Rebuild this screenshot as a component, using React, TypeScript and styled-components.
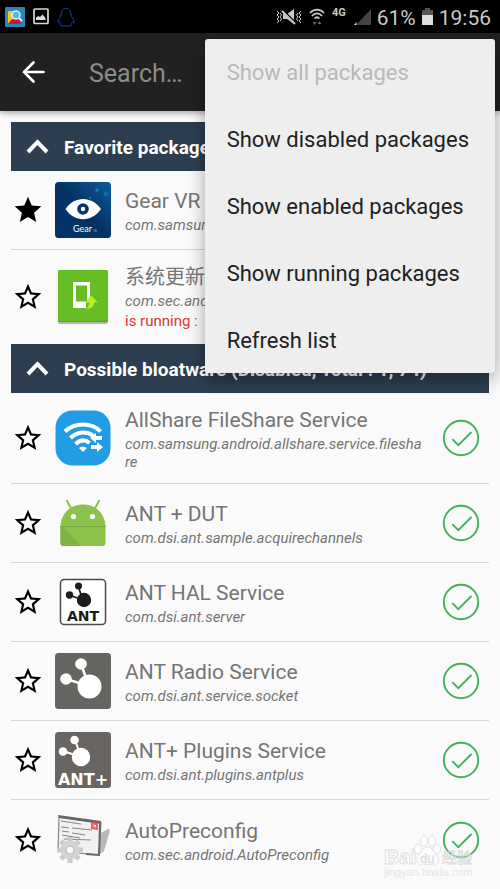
import React from 'react';
import styled, { createGlobalStyle, css } from 'styled-components';

const Global = createGlobalStyle`
  * { box-sizing: border-box; }
  body {
    margin: 0;
    background: #fafafa;
    font-family: Roboto, "Noto Sans CJK SC", sans-serif;
  }
  button { font: inherit; border: 0; padding: 0; background: none; color: inherit; text-align: left; }
`;

const Page = styled.div`
  position: relative;
  min-height: 100vh;
  overflow: hidden;
`;

const StatusBar = styled.header`
  display: flex;
  align-items: center;
  justify-content: space-between;
  height: 33px;
  padding: 0 9px 0 5px;
  background: #000;
  color: #c9c9c9;
`;

const StatusGroup = styled.div<{ $gap: number }>`
  display: flex;
  align-items: center;
  gap: ${(p) => p.$gap}px;
`;

const StatusText = styled.span`
  font-size: 21px;
  line-height: 33px;
  padding-top: 3px;
`;

const NetworkLabel = styled.span`
  align-self: flex-start;
  padding: 7px 2px 0 0;
  font-size: 11px;
  line-height: 14px;
  font-weight: 700;
`;

const Toolbar = styled.div`
  position: relative;
  display: flex;
  align-items: center;
  gap: 40px;
  height: 78px;
  padding: 0 20px;
  background: #212121;
  box-shadow: 0 2px 6px rgba(0, 0, 0, 0.35);
`;

const IconButton = styled.button`
  display: flex;
  flex: none;
  align-items: center;
  justify-content: center;
`;

const SearchInput = styled.input`
  flex: 1;
  min-width: 0;
  padding: 4px 0 0;
  border: 0;
  outline: 0;
  background: transparent;
  color: #fff;
  font: 400 25px/32px Roboto, sans-serif;
  &::placeholder { color: #8c8c8c; opacity: 1; }
`;

const Menu = styled.div`
  position: absolute;
  top: 39px;
  right: 5px;
  z-index: 2;
  display: grid;
  gap: 1px;
  border-radius: 3px;
  background: #eee;
  box-shadow: 0 6px 18px rgba(0, 0, 0, 0.35);
`;

const MenuItem = styled.button`
  height: 66px;
  padding: 2px 26px 0 22px;
  color: #212121;
  font-size: 22px;
  line-height: 30px;
  white-space: nowrap;
  &:disabled { color: #b9b9b9; }
`;

const List = styled.main`
  padding: 11px 11px 9px;
`;

const GroupHeader = styled.button`
  display: flex;
  align-items: center;
  gap: 15px;
  width: 100%;
  height: 49px;
  padding: 2px 15px 0;
  background: #2c3e50;
  color: #fff;
  font-size: 19px;
  line-height: 26px;
  font-weight: 700;
  white-space: nowrap;
`;

const Rows = styled.ul`
  margin: 0;
  padding: 0;
  list-style: none;
`;

const Row = styled.li<{ $divided: boolean }>`
  display: flex;
  align-items: center;
  min-height: 79px;
  padding: 12px 9px 12px 1px;
  ${(p) => p.$divided && css`border-bottom: 1px solid #d4d4d4;`}
`;

const AppIcon = styled.svg`
  flex: none;
  width: 56px;
  height: 56px;
  margin: -4px 14px -4px 11px;
`;

const RowText = styled.div`
  flex: 1;
  min-width: 0;
  padding-right: 18px;
  color: #757575;
`;

const Title = styled.div`
  font-size: 21px;
  line-height: 30px;
  &:lang(zh) { font-size: 20px; }
`;

const PackageName = styled.div`
  font-size: 15px;
  line-height: 18px;
  font-style: italic;
  word-break: break-all;
`;

const Running = styled.div`
  color: #d9382c;
  font-size: 15px;
  line-height: 22px;
`;

const Watermark = styled.div`
  position: absolute;
  right: 26px;
  bottom: 6px;
  z-index: 3;
  pointer-events: none;
  opacity: 0.8;
`;

const Star = ({ filled }: { filled?: boolean }) => (
  <svg width="32" height="32" viewBox="0 0 24 24" aria-hidden="true">
    <path
      d={filled
        ? 'M12 17.27L18.18 21l-1.64-7.03L22 9.24l-7.19-.61L12 2 9.19 8.63 2 9.24l5.46 4.73L5.82 21z'
        : 'M22 9.24l-7.19-.62L12 2 9.19 8.63 2 9.24l5.46 4.73L5.82 21 12 17.27 18.18 21l-1.63-7.03L22 9.24zM12 15.4l-3.76 2.27 1-4.28-3.32-2.88 4.38-.38L12 6.1l1.71 4.04 4.38.38-3.32 2.88 1 4.28L12 15.4z'}
      fill="#000"
    />
  </svg>
);

const Check = () => (
  <svg width="38" height="38" viewBox="0 0 38 38" fill="none" stroke="#43b05c" aria-hidden="true">
    <circle cx="19" cy="19" r="17.2" strokeWidth="1.9" />
    <path d="M10.3 20.2l6 6L29.5 13" strokeWidth="1.9" />
  </svg>
);

const Chevron = () => (
  <svg width="23" height="18" viewBox="0 0 23 18" fill="none" stroke="#fff" strokeWidth="4" aria-hidden="true">
    <path d="M2 13l9.5-9.8L21 13" />
  </svg>
);

type IconName = 'gear' | 'update' | 'share' | 'android' | 'antHal' | 'antRadio' | 'antPlus' | 'config';

const art: Record<IconName, React.ReactNode> = {
  gear: (
    <>
      <defs>
        <linearGradient id="gearBg" x1="0" y1="1" x2="1" y2="0">
          <stop offset="0" stopColor="#04336c" />
          <stop offset=".5" stopColor="#053263" />
          <stop offset="1" stopColor="#0b5a9d" />
        </linearGradient>
      </defs>
      <rect width="56" height="56" rx="3.5" fill="url(#gearBg)" />
      <circle cx="42" cy="8" r="1.8" fill="#2b8fd0" opacity=".7" />
      <circle cx="51" cy="12" r="2.6" fill="#2b8fd0" opacity=".4" />
      <circle cx="35" cy="16" r="1" fill="#4ba5dc" opacity=".6" />
      <path d="M10.5 27C19 13.5 37 13.5 46 27 37 40.5 19 40.5 10.5 27z" fill="#fff" />
      <circle cx="28" cy="27" r="5.8" fill="#063566" />
      <circle cx="28" cy="27" r="2.2" fill="#fff" />
      <text x="18" y="50" fill="#fff" fontSize="9" fontFamily="Lato, sans-serif">Gear</text>
      <text x="38" y="50" fill="#8fb3d4" fontSize="3" fontFamily="Lato, sans-serif">VR</text>
    </>
  ),
  update: (
    <>
      <rect x="3" y="4" width="50" height="51" rx="2" fill="#b5b5b5" />
      <rect x="3" y="1" width="50" height="52" rx="2" fill="#5c9d28" />
      <rect x="3" y="1" width="50" height="51" rx="2" fill="#68bd27" />
      <path fillRule="evenodd" d="M18 13h17v15l-4 5v6H18zM21 16.5v16h11v-16z" fill="#fff" />
      <path d="M29 39.5c4 0 5-2 5-6h-4l6.5-7 6 7H39c0 5-4 7-10 6z" fill="#b9f021" />
    </>
  ),
  share: (
    <>
      <rect x=".5" y=".5" width="55" height="55" rx="17" fill="#229ce4" />
      <g fill="none" stroke="#fff" strokeWidth="4">
        <path d="M10 21.5C19 12 37 12 45.5 21.5" />
        <path d="M15.5 28c7-7 17-7 23-2" />
        <path d="M20.5 34c5-4.5 10-4.5 14-1" />
      </g>
      <path d="M24 38c2.5-2 5.5-2 8 0l-4 4zM35 28l6-5v3h6v4h-6v3zM48 37l-6-5v3h-6v4h6v3z" fill="#fff" />
    </>
  ),
  android: (
    <>
      <path d="M11.5 5l5.5 10M44.5 5L39 15" stroke="#8bc34a" strokeWidth="2" />
      <path d="M5.5 32C6 2 50 2 50.5 32z" fill="#8bc34a" />
      <path d="M5.5 31h45v17a3 3 0 0 1-3 3h-39a3 3 0 0 1-3-3z" fill="#8bc34a" />
      <path d="M7 31l19 20H8.5a3 3 0 0 1-3-3V31z" fill="#7fb243" />
      <path d="M5.5 31.5h45" stroke="#76a83d" />
      <circle cx="18.5" cy="21.5" r="2.6" fill="#fff" />
      <circle cx="37.5" cy="21.5" r="2.6" fill="#fff" />
    </>
  ),
  antHal: (
    <>
      <rect x="5.5" y="5.5" width="45" height="45" rx="3.5" fill="#fff" stroke="#4a4a4a" strokeWidth="1.5" />
      <path d="M23 12l5 14M14 21l14 5" stroke="#1c1c1c" strokeWidth="1.8" />
      <g fill="#1c1c1c">
        <circle cx="23.5" cy="12" r="3.5" />
        <circle cx="14.5" cy="21" r="3.7" />
        <circle cx="29" cy="26" r="7.2" />
        <text x="28" y="47" textAnchor="middle" fontSize="14" fontWeight="700" fontFamily="DejaVu Sans, sans-serif">ANT</text>
      </g>
    </>
  ),
  antRadio: (
    <>
      <rect width="56" height="56" rx="3.5" fill="#666562" />
      <path d="M26 11l8 22M11 26l23 7" stroke="#fff" strokeWidth="2.5" />
      <g fill="#fff">
        <circle cx="26" cy="11" r="5.8" />
        <circle cx="11" cy="26" r="5.8" />
        <circle cx="34.5" cy="33.5" r="12" />
      </g>
    </>
  ),
  antPlus: (
    <>
      <rect width="56" height="56" rx="3.5" fill="#696562" />
      <path d="M20 8l6 17M8 19l18 6" stroke="#fff" strokeWidth="2" />
      <g fill="#fff">
        <circle cx="19.5" cy="8" r="4.3" />
        <circle cx="8" cy="19.5" r="4.3" />
        <circle cx="26" cy="25" r="9.2" />
        <text x="28" y="53" textAnchor="middle" fontSize="16" fontWeight="700" fontFamily="DejaVu Sans, sans-serif">ANT+</text>
      </g>
    </>
  ),
  config: (
    <>
      <path d="M44 22l9-5c2 0 2 2 1 5l-5 17-5 4H32z" fill="#8c8c8c" opacity=".6" />
      <path d="M4 5l42 6-2 32-41-4z" fill="#f1f1f1" stroke="#888" strokeWidth="1.2" />
      <path d="M3 3l43 6v3L4 6z" fill="#666" />
      <path d="M45 12l-1 31-13-1" stroke="#666" strokeWidth="2" fill="none" />
      <path d="M6 9l20 3M6 15l8 1M17 16l20 2M7 19l7 1M17 21l13 2M7 23l18 3M9 27l27 1" stroke="#888" strokeWidth="1.2" />
      <path d="M36 10l7 1v7l-7-1z" fill="#ef5b60" />
      <path d="M38.5 12.5l2.5 3m0-2.5l-2.5 2" stroke="#fff" />
      <g transform="translate(15 38)">
        <g stroke="#cbcbcb" strokeWidth="5">
          <path d="M0-13V13M-13 0H13M-9-9L9 9M-9 9L9-9" />
        </g>
        <circle r="9.5" fill="#d3d3d3" />
        <circle r="4" fill="#fafafa" stroke="#bababa" />
      </g>
    </>
  ),
};

interface AppEntry {
  icon: IconName;
  title: string;
  pkg: string;
  lang?: string;
  favorite?: boolean;
  running?: string;
}

const favorites: AppEntry[] = [
  { icon: 'gear', title: 'Gear VR', pkg: 'com.samsung.android.hmt', favorite: true },
  { icon: 'update', title: '系统更新', lang: 'zh', pkg: 'com.sec.android.fota', running: 'is running : ' },
];

const bloatware: AppEntry[] = [
  { icon: 'share', title: 'AllShare FileShare Service', pkg: 'com.samsung.android.allshare.service.fileshare' },
  { icon: 'android', title: 'ANT + DUT', pkg: 'com.dsi.ant.sample.acquirechannels' },
  { icon: 'antHal', title: 'ANT HAL Service', pkg: 'com.dsi.ant.server' },
  { icon: 'antRadio', title: 'ANT Radio Service', pkg: 'com.dsi.ant.service.socket' },
  { icon: 'antPlus', title: 'ANT+ Plugins Service', pkg: 'com.dsi.ant.plugins.antplus' },
  { icon: 'config', title: 'AutoPreconfig', pkg: 'com.sec.android.AutoPreconfig' },
];

const menuItems = [
  'Show all packages',
  'Show disabled packages',
  'Show enabled packages',
  'Show running packages',
  'Refresh list',
];

const Group = ({ title, apps }: { title: string; apps: AppEntry[] }) => (
  <section>
    <GroupHeader type="button" aria-expanded="true"><Chevron />{title}</GroupHeader>
    <Rows>
      {apps.map((app, i) => (
        <Row key={app.pkg} $divided={i < apps.length - 1}>
          <IconButton type="button" aria-label="Favorite"><Star filled={app.favorite} /></IconButton>
          <AppIcon viewBox="0 0 56 56" aria-hidden="true">{art[app.icon]}</AppIcon>
          <RowText>
            <Title lang={app.lang}>{app.title}</Title>
            <PackageName>{app.pkg}</PackageName>
            {app.running && <Running>{app.running}</Running>}
          </RowText>
          <IconButton type="button" aria-label="Enabled"><Check /></IconButton>
        </Row>
      ))}
    </Rows>
  </section>
);

export default function App() {
  return (
    <Page>
      <Global />
      <StatusBar>
        <StatusGroup $gap={8}>
          <svg width="20" height="20" viewBox="0 0 20 20" aria-hidden="true">
            <rect width="20" height="20" rx="1" fill="#2687b8" />
            <path d="M3 4h8v12H3z" fill="#e9c931" />
            <path d="M4 17c1-5 4-5 7-5s5 2 5 5z" fill="#c3173d" />
            <circle cx="11" cy="8" r="4" fill="#5cb5e2" stroke="#e8f2f5" strokeWidth="1.5" />
            <path d="M14 11l3 3" stroke="#e8f2f5" strokeWidth="2" />
          </svg>
          <svg width="16" height="17" viewBox="0 0 16 17" aria-hidden="true">
            <rect x="1" y="1" width="14" height="14.5" rx="1" fill="none" stroke="#d9d9d9" strokeWidth="1.7" />
            <path d="M3 12V9.500L5.500 8 7 9l2.500-2.500L12.500 10v2z" fill="#d9d9d9" />
          </svg>
          <svg width="18" height="20" viewBox="0 0 18 20" fill="none" stroke="#14489b" aria-hidden="true">
            <path d="M4 8c0-9 10-9 10 0 0 2 3 4 3 7 0 1-1 1-2 0 0 1-1 2-1 2 2 1 0 2-2 2H6c-2 0-4-1-2-2 0 0-1-1-1-2-1 1-2 1-2 0 0-3 3-5 3-7z" />
          </svg>
        </StatusGroup>
        <StatusGroup $gap={6}>
          <svg width="26" height="18" viewBox="0 0 26 18" fill="none" stroke="#c9c9c9" aria-hidden="true">
            <path d="M1 3l2 2-2 2 2 2-2 2 2 2-2 2M4 5l1.500 2L4 9l1.500 2L4 13M25 3l-2 2 2 2-2 2 2 2-2 2 2 2M22 5l-1.500 2L22 9l-1.500 2 1.500 2" />
            <path d="M7 6h4l7-5v15l-7-5H7z" fill="#c9c9c9" stroke="none" />
            <path d="M6 2l14 14" stroke="#000" strokeWidth="3" />
            <path d="M6 3l13 13" strokeWidth="2" />
          </svg>
          <svg width="18" height="18" viewBox="0 0 18 18" fill="none" stroke="#c9c9c9" strokeWidth="1.7" aria-hidden="true">
            <path d="M2 5c4-4.500 10-4.500 14 0M4 8c3-3.500 7-3.500 10 0M6.500 10.500c1.500-1.500 3.500-1.500 5 0" />
            <path d="M4.500 14h4L6.500 17zM9.500 16h4l-2-3z" fill="#666" stroke="none" />
          </svg>
          <NetworkLabel>4G</NetworkLabel>
          <svg width="17" height="18" viewBox="0 0 17 18" aria-hidden="true">
            <path d="M17 1v16H2z" fill="#444" />
            <path d="M2.500 14v3H0z" fill="#ddd" />
          </svg>
          <StatusText>61%</StatusText>
          <svg width="11" height="17" viewBox="0 0 11 17" aria-hidden="true">
            <path d="M3 0h5v2h3v6H0V2h3z" fill="#555" />
            <path d="M0 7h11v10H0z" fill="#ddd" />
          </svg>
          <StatusText>19:56</StatusText>
        </StatusGroup>
      </StatusBar>
      <Toolbar>
        <IconButton type="button" aria-label="Back">
          <svg width="29" height="26" viewBox="0 0 29 26" fill="none" stroke="#fff" strokeWidth="2.6" strokeLinecap="round" aria-hidden="true">
            <path d="M23.500 13H4M13.500 3.500L4 13l9.500 9.500" />
          </svg>
        </IconButton>
        <SearchInput type="search" aria-label="Search" placeholder="Search…" />
      </Toolbar>
      <List>
        <Group title="Favorite packages (Disabled, Total : 0, 2)" apps={favorites} />
        <Group title="Possible bloatware (Disabled, Total : 1, 74)" apps={bloatware} />
      </List>
      <Menu role="menu">
        {menuItems.map((item, i) => (
          <MenuItem key={item} type="button" role="menuitem" disabled={i === 0}>{item}</MenuItem>
        ))}
      </Menu>
      <Watermark>
        <svg width="90" height="46" viewBox="0 0 90 46" aria-hidden="true">
          <g fill="#fff" stroke="#d6d6d6" strokeWidth=".8">
            <text x="0" y="31" fontSize="21" fontWeight="700" fontFamily="Liberation Sans, sans-serif">Bai</text>
            <ellipse cx="34" cy="16" rx="3.5" ry="4.5" />
            <ellipse cx="40" cy="8" rx="3.5" ry="5" />
            <ellipse cx="48" cy="8" rx="3.5" ry="5" />
            <ellipse cx="53" cy="16" rx="3.5" ry="4.5" />
            <path d="M43.500 14c5 0 6 5 9 8 4 5 1 11-4 10-3-1-6-1-9 0-6 1-9-5-5-10 3-3 4-8 9-8z" />
            <text x="36" y="30" fontSize="13" fontFamily="Liberation Sans, sans-serif">du</text>
            <text x="58" y="30" fontSize="15" fontFamily="Noto Sans CJK SC, sans-serif">经验</text>
          </g>
          <text x="0" y="43" fill="#e1e1e1" fontSize="11" fontFamily="Liberation Sans, sans-serif">jingyan.baidu.com</text>
        </svg>
      </Watermark>
    </Page>
  );
}
